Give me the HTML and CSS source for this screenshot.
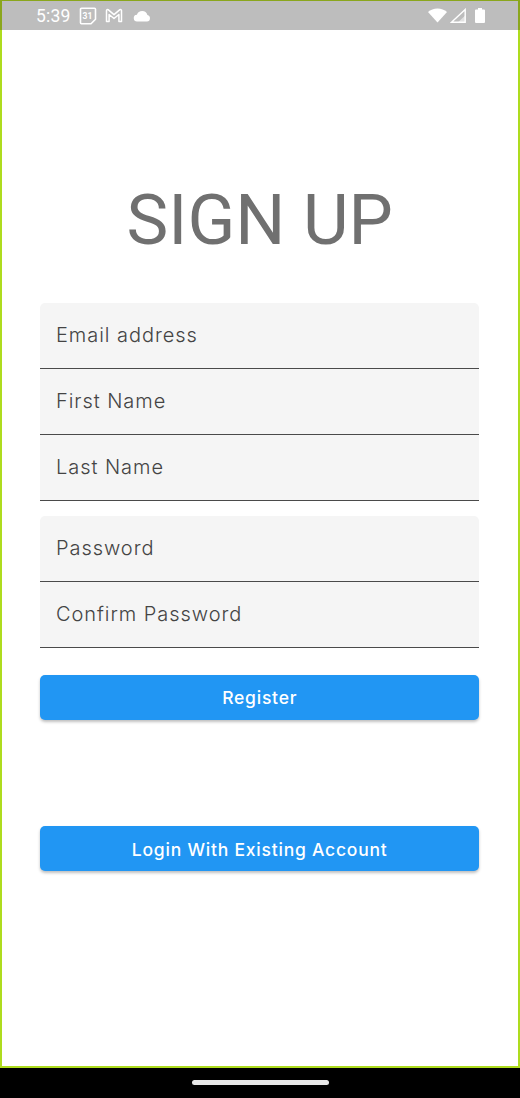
FILE: index.html
```html
<!DOCTYPE html>
<html lang="en">
<head>
<meta charset="utf-8">
<title>Sign Up</title>
<link rel="stylesheet" href="styles.css">
</head>
<body>
<div class="screen">
  <header class="status">
    <div class="status-left">
      <span class="time">5:39</span>
      <svg class="ic" width="18" height="18" viewBox="0 0 18 18"><path d="M1.500 2.200a1 1 0 0 1 1-1h13a1 1 0 0 1 1 1v10l-4.500 4.600H2.500a1 1 0 0 1-1-1z" fill="none" stroke="#fff" stroke-width="1.600" stroke-linejoin="round"/><text x="3.600" y="12.300" class="cal">31</text></svg>
      <svg class="ic" width="18" height="15" viewBox="0 0 18 15"><path d="M1.500 13.500V2.500a1 1 0 0 1 1.600-.8L9 6.600l5.900-4.900a1 1 0 0 1 1.600.8v11h-2.600V6.500L9 10.500l-4.900-4v7z" fill="none" stroke="#fff" stroke-width="1.500" stroke-linejoin="round"/></svg>
      <svg class="ic cloud" width="18" height="12" viewBox="0 0 18 12"><path d="M4.400 11.500a3.400 3.400 0 0 1-.5-6.800A5.600 5.600 0 0 1 9.200 1a5.500 5.500 0 0 1 5.200 4 3.300 3.300 0 0 1-.4 6.500z" fill="#fff"/></svg>
    </div>
    <div class="status-right">
      <svg width="19" height="15" viewBox="0 0 19 15"><path d="M0 4.100C2.500 1.800 5.800.5 9.500.5s7 1.300 9.500 3.600L9.500 14.500z" fill="#fff"/></svg>
      <svg width="16" height="15" viewBox="0 0 16 15"><path d="M1.500 14.300L15.200 1.500v12.800z" fill="none" stroke="#fff" stroke-width="1.400"/><path d="M8 14.300l7.200-6.700v6.700z" fill="#fff" opacity=".55"/></svg>
      <svg class="battery" width="10" height="15" viewBox="0 0 10 15"><path d="M3 0h4v1.500h2a1 1 0 0 1 1 1V14a1 1 0 0 1-1 1H1a1 1 0 0 1-1-1V2.500a1 1 0 0 1 1-1h2z" fill="#fff"/></svg>
    </div>
  </header>

  <main class="app">
    <h1 class="title">SIGN UP</h1>
    <div class="group">
      <div class="field">Email address</div>
      <div class="field">First Name</div>
      <div class="field">Last Name</div>
    </div>
    <div class="group">
      <div class="field">Password</div>
      <div class="field">Confirm Password</div>
    </div>
    <button class="btn btn-register">Register</button>
    <button class="btn btn-login">Login With Existing Account</button>
  </main>

  <footer class="nav"><span class="pill"></span></footer>
</div>
</body>
</html>
```
FILE: styles.css
```css
* { box-sizing: border-box; }
html, body { margin: 0; padding: 0; }
body { width: 520px; height: 1098px; overflow: hidden; background: #000; }
.screen { width: 520px; height: 1098px; display: flex; flex-direction: column; }

.status {
  height: 30px;
  background: #bdbdbd;
  border: 2px solid #8aa61c;
  border-width: 1px 2px 0;
  display: flex;
  justify-content: space-between;
  align-items: center;
  padding: 0 33px 0 34px;
  color: #fff;
}
.status-left { display: flex; align-items: center; gap: 8px; }
.status-right { display: flex; align-items: center; gap: 3px; }
.time { font: 17.500px "Roboto", sans-serif; letter-spacing: .2px; }
.ic { display: block; }
.cloud { margin-left: 2px; }
.battery { margin-left: 6px; }
.cal { font: bold 8.500px "Roboto", sans-serif; fill: #fff; }

.app {
  height: 1038px;
  background: #fff;
  border: 2px solid #aedc1e;
  border-top: 0;
  padding: 0 39px 0 38.400px;
  display: flex;
  flex-direction: column;
}
.title {
  margin: 150px 0 0;
  height: 123px;
  font: 400 70.300px/80px "Roboto", sans-serif;
  color: #707070;
  text-align: center;
}
.group {
  background: #f5f5f5;
  border-radius: 5px 5px 0 0;
  margin-bottom: 15px;
}
.field {
  height: 66px;
  border-bottom: 1px solid #4a4a4a;
  padding: 20px 0 0 15.600px;
  font: 300 20px/24px "Inter", sans-serif;
  letter-spacing: .95px;
  color: #444;
}
.btn {
  display: block;
  width: 100%;
  height: 45px;
  border: 0;
  border-radius: 5px;
  background: #2196f3;
  color: #fff;
  font: 500 17.500px "Inter", sans-serif;
  letter-spacing: .78px;
  box-shadow: 0 2px 3px rgba(0,0,0,.25);
  padding: 0;
}
.btn-register { margin-top: 12px; }
.btn-login { margin-top: 106px; padding-top: 2px; }

.nav {
  flex: 1;
  background: #000;
  display: flex;
  justify-content: center;
  align-items: flex-start;
  padding-top: 12px;
}
.pill { width: 137px; height: 5px; border-radius: 3px; background: #e8e8e8; }
```
